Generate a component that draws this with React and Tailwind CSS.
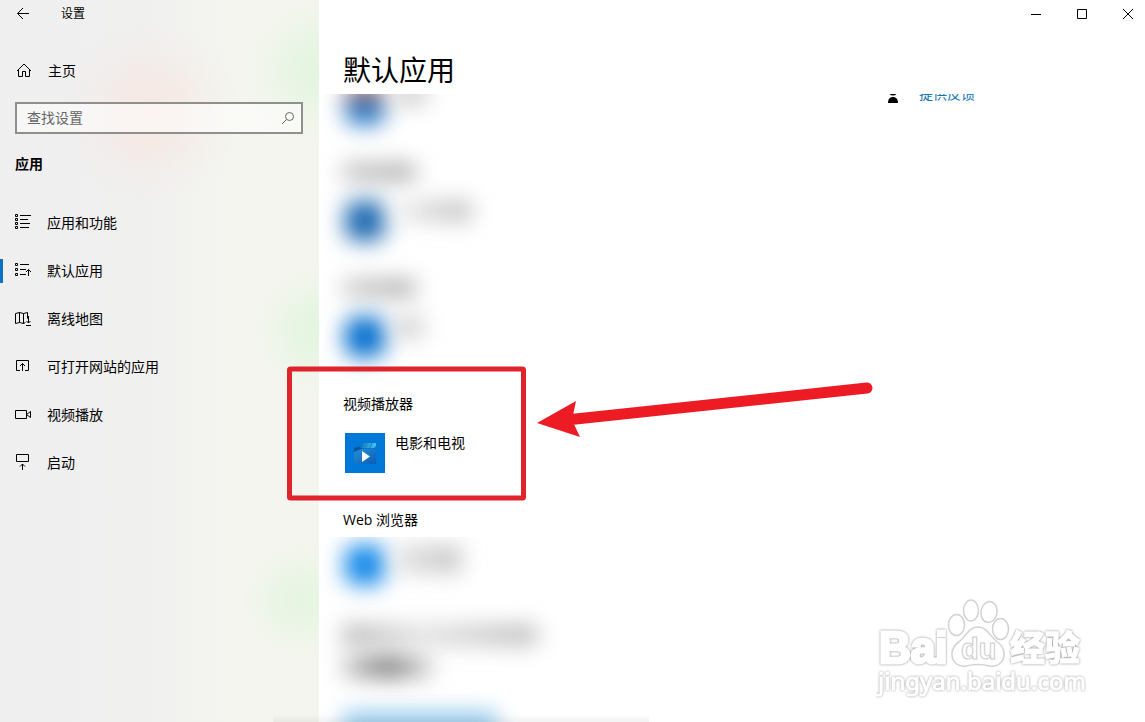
import React, { useState } from "react";

const iconProps = {
  width: 16,
  height: 16,
  viewBox: "0 0 16 16",
  fill: "none",
  stroke: "currentColor",
  strokeWidth: 1,
  overflow: "visible",
  className: "shrink-0",
  "aria-hidden": true,
};

const AppsIcon = () => (
  <svg {...iconProps}>
    <path d="M.5-.5h2v2h-2zM.5 3.500h2v2h-2zM.5 7.500h2v2h-2zM.5 11.500h2v2h-2zM5 .5h11M5 4.500h8M5 8.500h10M5 12.500h9" />
  </svg>
);

const DefaultAppsIcon = () => (
  <svg {...iconProps}>
    <path d="M.5.5h2v2h-2zM.5 5.500h2v2h-2zM.5 10.500h2v2h-2zM5 1.500h9M5 6.500h6M5 11.500h6M13.500 13V6.500M11 9l2.500-2.500L16 9" />
  </svg>
);

const MapsIcon = () => (
  <svg {...iconProps}>
    <path d="M.5 2.500l4-1 4 1 4-1v6M.5 2.500v10l4-1 4 1 2-1M4.500 1.500v10M8.500 2.500v10M13.500 5v7M11.500 10l2 2 2-2M11 14.500h5" />
  </svg>
);

const WebsiteAppsIcon = () => (
  <svg {...iconProps}>
    <path d="M5 11.500H1.500v-10h12v10H10M7.500 12V4.500M5 7l2.500-2.500L10 7" />
  </svg>
);

const VideoIcon = () => (
  <svg {...iconProps}>
    <path d="M.5 3.500h11v8H.5zM11.500 7.500l4-3v6l-4-3" />
  </svg>
);

const StartupIcon = () => (
  <svg {...iconProps}>
    <path d="M1.500-.5h12v7h-12zM7.500 15V9M5 11.500l2.500-2.500 2.500 2.500" />
  </svg>
);

const navItems = [
  { label: "应用和功能", Icon: AppsIcon },
  { label: "默认应用", Icon: DefaultAppsIcon },
  { label: "离线地图", Icon: MapsIcon },
  { label: "可打开网站的应用", Icon: WebsiteAppsIcon },
  { label: "视频播放", Icon: VideoIcon },
  { label: "启动", Icon: StartupIcon },
];

const Sidebar = () => {
  const [active, setActive] = useState("默认应用");
  const [query, setQuery] = useState("");

  return (
    <aside className="w-[319px] shrink-0 bg-[radial-gradient(circle_at_150px_112px,#f8e5dfc0_0,#f8e5df90_30px,#f8e5df30_62px,#f8e5df00_90px),radial-gradient(circle_at_318px_70px,#dff5dcd0_0,#dff5dc90_28px,#dff5dc30_55px,#dff5dc00_80px),radial-gradient(circle_at_318px_330px,#dff5dcd0_0,#dff5dc90_26px,#dff5dc30_50px,#dff5dc00_72px),radial-gradient(circle_at_302px_600px,#e2f5ded0_0,#e2f5de90_25px,#e2f5de30_46px,#e2f5de00_66px),linear-gradient(to_right,#efeff0_0,#f0f0ef_45%,#f4f5ef_75%,#f5f5ef_100%)]">
      <div className="flex h-7 items-center pl-4 text-xs">
        <button aria-label="返回">
          <svg width="14" height="14" viewBox="0 0 14 14" fill="none" stroke="currentColor" aria-hidden="true">
            <path d="M13 6.500H1.500M7 1L1.500 6.500 7 12" />
          </svg>
        </button>
        <span className="ml-[31px]">设置</span>
      </div>

      <button className="mt-[19px] flex h-12 w-full items-center gap-4 pl-4">
        <svg {...iconProps}>
          <path d="M1 8L8 1l7 7M2.500 7v6.500h4v-5h3v5h4V7" />
        </svg>
        主页
      </button>

      <label className="mr-4 mt-[7px] ml-[15px] flex h-8 items-center border-2 border-[#8f8f8c] bg-white/50 pr-1.5 pl-2.5">
        <input
          type="text"
          aria-label="查找设置"
          placeholder="查找设置"
          value={query}
          onChange={(e) => setQuery(e.target.value)}
          className="min-w-0 flex-1 bg-transparent outline-none placeholder:text-[#666]"
        />
        <svg width="14" height="14" viewBox="0 0 14 14" fill="none" stroke="#666" aria-hidden="true">
          <circle cx="8.500" cy="5.500" r="4" />
          <path d="M5.500 8.500L1 13" />
        </svg>
      </label>

      <h2 className="mt-5 pl-[15px] leading-5 font-bold">应用</h2>

      <nav className="mt-[25px]">
        {navItems.map(({ label, Icon }) => (
          <button
            key={label}
            onClick={() => setActive(label)}
            className="flex h-12 w-full items-center"
          >
            <span className={active === label ? "h-6 w-[3px] bg-[#0f6fc0]" : "h-6 w-[3px]"} />
            <span className="flex items-center gap-4 pl-3">
              <Icon />
              {label}
            </span>
          </button>
        ))}
      </nav>
    </aside>
  );
};

const MoviesLogo = () => (
  <svg width="40" height="40" viewBox="0 0 40 40" aria-hidden="true">
    <defs>
      <linearGradient id="film" x1="0" y1="0" x2="1" y2="1">
        <stop offset="0" stopColor="#2590d8" />
        <stop offset="1" stopColor="#0c5cb4" />
      </linearGradient>
      <linearGradient id="clap" x1="0" y1="0" x2="1" y2="0">
        <stop offset="0" stopColor="#1273bd" />
        <stop offset="1" stopColor="#45c4ee" />
      </linearGradient>
    </defs>
    <rect width="40" height="40" fill="#0078d7" />
    <path d="M9 15l8-2v4l-6 2H9z" fill="#0b559f" />
    <path d="M17 12l2-2h12v3l-2 2H15z" fill="url(#clap)" />
    <path d="M22 10l-2 5M27 10l-2 5" stroke="#1a86cf" />
    <path d="M9 19l7-3h15v15H11l-2-2z" fill="url(#film)" />
    <path d="M17 18v11l8-5.500z" fill="#f4f8fc" />
  </svg>
);

// Section whose contents are hidden behind a blur
const HiddenSection = ({ titleClass, tileClass, nameClass }) => (
  <section className="pb-[37px]" aria-hidden="true">
    <div className="flex h-5 items-center">
      <div className={`h-4 w-[72px] blur-[11px] ${titleClass}`} />
    </div>
    <div className="mt-[19px] flex gap-2.5 pl-0.5">
      <div className={`size-10 rounded-xl blur-[11px] ${tileClass}`} />
      <div className={`h-5 blur-[11px] ${nameClass}`} />
    </div>
  </section>
);

const AppList = () => (
  <div className="flex-1 pl-6">
    <HiddenSection
      titleClass="bg-transparent"
      tileClass="bg-linear-to-b from-[#a8604e] from-20% to-[#2478c8] to-50%"
      nameClass="w-8 bg-[#ccc]"
    />
    <HiddenSection
      titleClass="bg-linear-to-r from-[#bbb] to-[#a0a0a0]"
      tileClass="bg-[#1c68b0]"
      nameClass="w-[76px] bg-linear-to-r from-[#eee] to-[#b8b8b8]"
    />
    <HiddenSection
      titleClass="bg-linear-to-r from-[#c4c4c4] to-[#a0a0a0]"
      tileClass="bg-[#006ccc]"
      nameClass="w-7 bg-[#ccc]"
    />

    <section className="pb-[37px]">
      <h3 className="leading-5">视频播放器</h3>
      <button className="mt-[19px] flex items-start gap-2.5 pl-0.5 leading-5">
        <MoviesLogo />
        电影和电视
      </button>
    </section>

    <section>
      <h3 className="leading-5">Web 浏览器</h3>
      <div className="mt-[7px] -ml-6 overflow-hidden pt-2 pb-10 pl-6" aria-hidden="true">
        <div className="flex gap-2.5 pl-0.5">
          <div className="size-10 rounded-xl bg-[#1087e8] blur-[11px]" />
          <div className="h-7 w-[66px] bg-linear-to-r from-[#e4e4e4] to-[#c4c4c4] blur-[11px]" />
        </div>
      </div>
    </section>

    <div className="flex flex-col items-start gap-3" aria-hidden="true">
      <div className="h-5 w-[194px] bg-linear-to-r from-[#b0b0b0] via-[#e0e0e0] via-40% to-[#b8b8b8] blur-[11px]" />
      <div className="h-5 w-[90px] bg-linear-to-r from-[#ccc] via-[#6c6c6c] to-[#ddd] blur-[11px]" />
      <div className="mt-6 h-5 w-[154px] bg-[#80c0e8] blur-[11px]" />
    </div>
  </div>
);

const WindowButtons = () => (
  <div className="flex h-7 items-center justify-end gap-9 pr-3">
    <button aria-label="最小化">
      <svg width="10" height="10" viewBox="0 0 10 10" stroke="currentColor" aria-hidden="true">
        <path d="M0 5.500h10" />
      </svg>
    </button>
    <button aria-label="最大化">
      <svg width="10" height="10" viewBox="0 0 10 10" fill="none" stroke="currentColor" aria-hidden="true">
        <path d="M.5.5h9v9h-9z" />
      </svg>
    </button>
    <button aria-label="关闭">
      <svg width="10" height="10" viewBox="0 0 10 10" stroke="currentColor" aria-hidden="true">
        <path d="M0 0l10 10M10 0L0 10" />
      </svg>
    </button>
  </div>
);

const Annotation = () => (
  <svg
    width="590"
    height="136"
    viewBox="0 0 590 136"
    className="pointer-events-none absolute top-[366px] left-[287px]"
    aria-hidden="true"
  >
    <rect x="2.500" y="3" width="234" height="129" rx="1" fill="none" stroke="#df242c" strokeWidth="5" />
    <path d="M284 53.500L580 22" stroke="#ed1c24" strokeWidth="11" strokeLinecap="round" />
    <path d="M250 57l39-22-4 19 8 17z" fill="#ed1c24" />
  </svg>
);

// White shapes, made visible on the white page by their soft grey edge
const Watermark = () => (
  <svg
    width="210"
    height="104"
    viewBox="0 0 210 104"
    className="pointer-events-none absolute right-[59px] bottom-[22px]"
    fill="#fff"
  >
    <g className="drop-shadow-[0_0_1px_#888]" stroke="#fff">
      <text x="3" y="67" fontFamily="Liberation Sans, sans-serif" fontWeight="700" fontSize="44" strokeWidth="3">
        Bai
      </text>
      <text x="134" y="65" fontFamily="Noto Sans CJK SC, sans-serif" fontWeight="900" fontSize="35" strokeWidth="1">
        经验
      </text>
    </g>
    <g stroke="#d2d2d2" strokeWidth="1.500">
      <ellipse cx="80.500" cy="29" rx="8" ry="10.500" />
      <ellipse cx="95" cy="14.500" rx="7.500" ry="10.500" />
      <ellipse cx="113" cy="16" rx="8" ry="10.500" transform="rotate(10 113 16)" />
      <ellipse cx="124.500" cy="33" rx="8" ry="10.500" />
      <path d="M102 31c9 0 12 9 18 14 6 4 9 9 8 15-1 7-7 11-14 10-8-2-16-2-24 0-7 1-13-3-14-10-1-6 3-12 8-15 6-5 9-14 18-14z" />
    </g>
    <text x="85" y="63" fontFamily="Liberation Sans, sans-serif" fontSize="29" fontWeight="700" stroke="#ccc">
      du
    </text>
    <text
      x="2"
      y="94"
      fontFamily="Noto Sans, sans-serif"
      fontSize="24"
      stroke="#fff"
      className="drop-shadow-[0_0_1px_#999]"
    >
      jingyan.baidu.com
    </text>
  </svg>
);

const App = () => {
  return (
    <div className="relative flex h-screen overflow-hidden bg-white font-['Open_Sans','Noto_Sans_CJK_SC',sans-serif] text-sm text-black">
      <Sidebar />

      <main className="flex min-w-0 flex-1 flex-col">
        <WindowButtons />
        <h1 className="mt-5 h-[46px] shrink-0 pl-6 text-[28px] leading-[44px]">默认应用</h1>

        <div className="min-h-0 flex-1 overflow-hidden">
          <div className="-mt-12 flex">
            <AppList />
            <div className="flex w-[258px] items-start gap-5 pt-[38px]">
              <svg width="12" height="20" viewBox="0 0 12 20" className="shrink-0" aria-hidden="true">
                <circle cx="6" cy="7.500" r="4" />
                <path d="M1 19c0-4 2-6 5-6s5 2 5 6z" />
              </svg>
              <a href="#feedback" className="leading-5 text-[#0f74b4]">提供反馈</a>
            </div>
          </div>
        </div>
      </main>

      <div className="absolute bottom-0 left-[273px] h-2 w-[376px] bg-linear-to-b from-transparent to-black/5" />
      <Annotation />
      <Watermark />
    </div>
  );
};

export default App;
